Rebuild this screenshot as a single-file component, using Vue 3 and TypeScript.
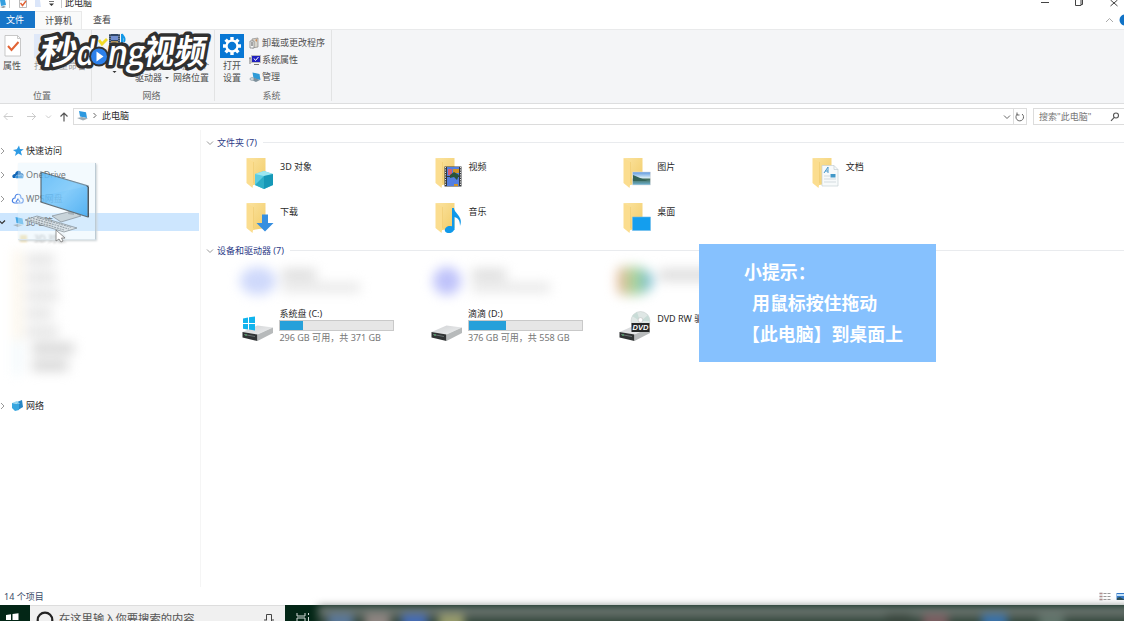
<script setup lang="ts">
interface Folder { name: string; kind: string }
interface Drive { name: string; kind: string; used?: number; detail?: string }

const folders: Folder[] = [
  { name: '3D 对象', kind: 'cube' },
  { name: '视频', kind: 'film' },
  { name: '图片', kind: 'photo' },
  { name: '文档', kind: 'doc' },
  { name: '下载', kind: 'down' },
  { name: '音乐', kind: 'note' },
  { name: '桌面', kind: 'desk' },
]
const drives: Drive[] = [
  { name: '系统盘 (C:)', kind: 'win', used: 20, detail: '296 GB 可用，共 371 GB' },
  { name: '滴滴 (D:)', kind: 'disk', used: 33, detail: '376 GB 可用，共 558 GB' },
  { name: 'DVD RW 驱动器', kind: 'dvd' },
]
const hazyRows: { w: number; deep: boolean }[] = [
  { w: 28, deep: false }, { w: 30, deep: false }, { w: 32, deep: false }, { w: 26, deep: false },
  { w: 32, deep: false }, { w: 42, deep: true }, { w: 36, deep: true },
]
</script>

<template>
  <div class="window">
    <header class="titlebar">
      <svg class="quick" width="62" height="11" viewBox="0 0 62 11">
        <path d="M0 0h5l1 5-5 1z" fill="#369fdf" /><path d="M0 7l4-1 2 1-3 1z" fill="#8b969e" />
        <path d="M9.500 0v8" stroke="#bbb" stroke-width=".8" />
        <path d="M19.500 0h7v7.500h-7z" fill="#fff" stroke="#aaa" stroke-width=".8" />
        <path d="M20.500 3l2 2.500L26 1" fill="none" stroke="#e16336" stroke-width="1.400" />
        <path d="M35 0h5l1 7h-6z" fill="#dbe6fa" />
        <path d="M49 1.500h5" stroke="#555" stroke-width=".8" /><path d="M49 3.500h5l-2.500 2.500z" fill="#333" />
        <path d="M61.500 0v8" stroke="#bbb" stroke-width=".8" />
      </svg>
      <span class="wtitle">此电脑</span>
      <svg class="controls" width="90" height="11" viewBox="0 0 90 11" fill="none" stroke="#444" stroke-width="1">
        <path d="M7 2.500h8M41.500 -1v6.500h5.500V-1M43 -1h5.500v5.500h-1.500M76.500 0l7 6M83.500 0l-7 6" />
      </svg>
    </header>
    <nav class="tabs">
      <span class="tab file">文件</span><span class="tab active">计算机</span><span class="tab view">查看</span>
      <svg class="help" width="20" height="18" viewBox="0 0 20 18">
        <path d="M2 11l3.500-3.500L9 11" fill="none" stroke="#aaa" /><circle cx="21" cy="9" r="5.500" fill="#1072c6" />
      </svg>
    </nav>
    <section class="ribbon">
      <div class="rgroup place">
        <div class="rmain">
          <div class="rbtn first">
            <svg width="20" height="24" viewBox="0 0 20 24">
              <path d="M2 1.500h12.500l3 3V22H2z" fill="#fff" stroke="#bbb" stroke-width=".8" /><path d="M14.500 1.500v3h3" fill="none" stroke="#bbb" stroke-width=".8" />
              <path d="M5 12l3.500 4L15.500 8" fill="none" stroke="#e16335" stroke-width="2" />
            </svg>
            <span>属性</span>
          </div>
          <div class="rbtn faded"><i class="sheet"></i><span>打开&nbsp;&nbsp; 重命名</span></div>
        </div>
        <span class="rlabel">位置</span>
      </div>
      <div class="rgroup net">
        <div class="rmain netmain">
          <svg class="media" width="20" height="44" viewBox="0 0 20 44">
            <path d="M1 3h11v14H1z" fill="#314767" /><path d="M3 5h7v4H3z" fill="#718ed0" /><path d="M3 10h7v5H3z" fill="#b3955c" /><path d="M2 3v13M11 3v13" stroke="#a8aaa7" stroke-dasharray="1 1" />
            <path d="M14 14V3c1 3 4 3 2 8" fill="none" stroke="#1398e7" stroke-width="2" />
            <path d="M4.500 40h4l-2 2z" fill="#333" />
          </svg>
          <div class="nettext"><span class="under">映射网络 添加一个</span><span>驱动器<b class="caret"></b>网络位置</span></div>
        </div>
        <span class="rlabel">网络</span>
      </div>
      <div class="rgroup sys">
        <div class="rmain sysmain">
          <div class="setting">
            <svg width="24" height="24" viewBox="0 0 24 24">
              <path d="M0 0h24v24H0z" fill="#0877d4" />
              <g stroke="#fff" stroke-width="3.400"><path d="M12 3v18M3 12h18M5.600 5.600l12.800 12.800M18.400 5.600L5.600 18.400" /></g>
              <circle cx="12" cy="12" r="6.600" fill="#fff" /><circle cx="12" cy="12" r="4.300" fill="#0877d4" />
            </svg>
            <span>打开</span><span>设置</span>
          </div>
          <div class="syslist">
            <div>
              <svg width="12" height="12" viewBox="0 0 12 12"><path d="M3 2l6-1v9l-6 1z" fill="#d8d4cb" stroke="#888" stroke-width=".7" /><path d="M1 4h4v7H1z" fill="#f3f4f4" stroke="#777" stroke-width=".7" /><path d="M6 3l2-1v3z" fill="#ce8954" /><path d="M2 6h2M2 8h2" stroke="#555" /></svg>
              <span>卸载或更改程序</span>
            </div>
            <div>
              <svg width="12" height="12" viewBox="0 0 12 12"><path d="M2.500 1.500h9v7h-9z" fill="#2020bd" stroke="#bbb" /><path d="M5 4.500l1.500 2L9.500 3" fill="none" stroke="#fff" /><path d="M0 4h2M1 4v6M5 10.500h5" stroke="#777" /></svg>
              <span>系统属性</span>
            </div>
            <div>
              <svg width="12" height="12" viewBox="0 0 12 12"><path d="M3.500 1.500l7 1.500 1 6-7-1.500z" fill="#309bd7" /><path d="M0 8l4-1.500 7 2.500-4 2z" fill="#7c8f9b" /><circle cx="3" cy="8" r="2" fill="#aeb9be" /><circle cx="3" cy="8" r=".7" fill="#fff" /></svg>
              <span>管理</span>
            </div>
          </div>
        </div>
        <span class="rlabel">系统</span>
      </div>
    </section>

    <section class="address">
      <svg width="73" height="18" viewBox="0 0 73 18" fill="none" stroke="#ccc">
        <path d="M4 8.500h9M7.500 5L4 8.500 7.500 12M27 8.500h9M32 5l3.500 3.500L32 12M46 7.500l2.500 2.500L51 7.500" />
        <path d="M64 13.500V5M60.500 8.500L64 5l3.500 3.500" stroke="#555" stroke-width="1.200" />
      </svg>
      <div class="pathbox">
        <svg width="28" height="15" viewBox="0 0 28 15"><path d="M5 2l7 1.300 1 5.700-7-1.500z" fill="#2d99e0" /><path d="M3 9l5-1 6 1.500-5 2z" fill="#9cabb4" /><path d="M19.500 4l2.500 2.500-2.500 2.500" fill="none" stroke="#666" /></svg>
        <span>此电脑</span>
        <svg class="refresh" width="26" height="16" viewBox="0 0 26 16" fill="none" stroke="#666"><path d="M4 6.500l3 3 3-3" /><path d="M13.500 0v16" stroke="#ddd" /><path d="M17.500 5a3.800 3.800 0 1 0 4.500 0M17 3.500V6h2.500" /></svg>
      </div>
      <div class="search"><span>搜索"此电脑"</span><svg width="12" height="12" viewBox="0 0 12 12" fill="none" stroke="#555" stroke-width="1.100"><circle cx="7" cy="4.500" r="2.500" /><path d="M5.300 6.300L2 9.800" /></svg></div>
    </section>

    <main class="body">
      <aside class="side">
        <div class="nav">
          <svg width="26" height="18" viewBox="0 0 26 18"><path d="M1 6l3 3-3 3" fill="none" stroke="#999" /><path d="M19 3.500l1 3.500 3.800.300-3 2.300 1.200 4-3.700-2-3.300 2.400 1-4-3-2 3.800-.800z" fill="#2e9be4" /></svg><span>快速访问</span>
        </div>
        <div class="nav">
          <svg width="26" height="18" viewBox="0 0 26 18"><path d="M1 6l3 3-3 3" fill="none" stroke="#999" /><path d="M13 12c-2-3 1-4 2-4 1-4 6-4 6-1 3 0 3 3 2 5z" fill="#1267b8" /><path d="M16 12.500c-1-3 1-4 3-3 3-2 5 1 4 3z" fill="#2589d7" stroke="#fff" stroke-width=".4" /></svg><span>OneDrive</span>
        </div>
        <div class="nav">
          <svg width="26" height="18" viewBox="0 0 26 18"><path d="M1 6l3 3-3 3" fill="none" stroke="#999" /><path d="M15 13c-4 0-3-5 0-5 0-5 6-5 6 0 3 0 3 5 0 5zM16 12l2-3 2 3" fill="none" stroke="#4780e4" stroke-width="1.200" /></svg><span>WPS网盘</span>
        </div>
        <div class="nav selected">
          <svg width="26" height="18" viewBox="0 0 26 18"><path d="M-1 7.500l3 3 3-3" fill="none" stroke="#333" stroke-width="1.200" /><path d="M15.500 4l7 1.500 1 6-7-1.500z" fill="#44a8e6" /><path d="M13 12l5-1 5 1-5 2z" fill="#a7b7c2" /></svg><span>此电脑</span>
        </div>
        <div class="subrow"><i></i><span>3D 对象</span></div>
        <div class="haze">
          <div v-for="(r, i) in hazyRows" :key="i" class="hrow" :class="{ deep: r.deep }"><i></i><b :style="{ width: r.w + 'px' }"></b></div>
        </div>
        <div class="nav network">
          <svg width="26" height="18" viewBox="0 0 26 18"><path d="M1 6l3 3-3 3" fill="none" stroke="#999" /><path d="M17 5l5-2 1 7-5 3z" fill="#2787c6" /><path d="M12 6l7 1v6l-4 1-3-3z" fill="#38a6df" /><path d="M12 6l5-2 3 3z" fill="#95d7f2" /></svg><span>网络</span>
        </div>
      </aside>

      <section class="content">
        <h2><svg width="9" height="8" viewBox="0 0 9 8"><path d="M1 2.500l3 3 3-3" fill="none" stroke="#999" /></svg><span>文件夹 (7)</span><i></i></h2>
        <div class="grid folders">
          <div v-for="f in folders" :key="f.name" class="item">
            <svg width="34" height="34" viewBox="0 0 34 34">
              <defs><linearGradient id="fold" x1="0" x2="1" y2="1"><stop stop-color="#fbe3a0" /><stop offset="1" stop-color="#f2cc68" /></linearGradient>
                <linearGradient id="pic" x2="0" y2="1"><stop stop-color="#5a96df" /><stop offset=".45" stop-color="#d9edf5" /><stop offset=".55" stop-color="#426c57" /><stop offset="1" stop-color="#6fb4d8" /></linearGradient></defs>
              <path d="M2 1h18.500v25L8 28z" fill="url(#fold)" /><path d="M1.500 1L8.500 5v21l-1 5-6-5z" fill="#fbdd8f" /><path d="M8.500 5v21" stroke="#ecc669" stroke-width=".5" />
              <g v-if="f.kind === 'cube'"><path d="M10 17l9-3 9 3v11l-9 4-9-4z" fill="#5bcce1" /><path d="M10 17l9-3 9 3-9 2z" fill="#9be7f0" /><path d="M19 19l9-2v11l-9 4z" fill="#1698b7" /><path d="M10 28l9-9v13z" fill="#2cadc6" /></g>
              <g v-else-if="f.kind === 'film'"><path d="M10.500 9.500h17v20h-17z" fill="#35383c" /><path d="M13 10h12v9H13zM13 20h12v9H13z" fill="#537fe0" /><path d="M14 12h4v6h-4z" fill="#cf6078" /><path d="M19 12h6v4h-6zM20 27h4v2h-4z" fill="#d09428" /><path d="M20 15l5 3-2 5-3-3-4 1v-3z" fill="#29533b" /><path d="M11.500 10v19M26.500 10v19" stroke="#ddd" stroke-dasharray="1.200 1.200" /></g>
              <g v-else-if="f.kind === 'photo'"><path d="M10.500 15h18v13h-18z" fill="url(#pic)" stroke="#ddd" stroke-width=".6" /><path d="M11 18c5 2 9 4 15 6H11z" fill="#336459" /></g>
              <g v-else-if="f.kind === 'doc'"><path d="M11 8.500h12l4 4V29H11z" fill="#f7fafb" stroke="#c6d1d6" stroke-width=".7" /><path d="M23 8.500v4h4M13 19h6M13 22h12M13 25h12" fill="none" stroke="#c3cdd4" stroke-width=".7" /><path d="M13 16l4-6v6M14 14h3" fill="none" stroke="#4898cb" /><path d="M19.500 17h5v3.500h-5z" fill="#4298c8" /></g>
              <path v-else-if="f.kind === 'down'" d="M17 12.500h6V21h5.500L20 29.500 11.500 21H17z" fill="#368fe0" />
              <g v-else-if="f.kind === 'note'"><ellipse cx="15.500" cy="27.500" rx="4.800" ry="3.500" fill="#1199e9" transform="rotate(-15 15.500 27.500)" /><path d="M18 28V6h2c0 5 10 9 6 18 0-6-2-8-5.500-9v13z" fill="#1199e9" /></g>
              <path v-else d="M10.500 15h18v13.500h-18z" fill="#149eee" stroke="#6dbbe9" stroke-width=".6" />
            </svg>
            <span>{{ f.name }}</span>
          </div>
        </div>
        <h2 class="second"><svg width="9" height="8" viewBox="0 0 9 8"><path d="M1 2.500l3 3 3-3" fill="none" stroke="#999" /></svg><span>设备和驱动器 (7)</span><i></i></h2>
        <div class="grid cloudy">
          <div class="fog one"><i></i><p><b></b><b></b></p></div>
          <div class="fog two"><i></i><p><b></b><b></b></p></div>
          <div class="fog three"><i></i><p><b></b></p></div>
        </div>
        <div class="grid drives">
          <div v-for="d in drives" :key="d.name" class="drive">
            <svg width="38" height="36" viewBox="0 0 38 36">
              <defs><linearGradient id="metal" x2="1" y2="1"><stop stop-color="#cfd1d3" /><stop offset="1" stop-color="#eff0f1" /></linearGradient></defs>
              <path d="M1.500 23l15-6.500 15.500 2-16 7z" fill="url(#metal)" /><path d="M1.500 23l15 2.500v6.500l-15-3.500z" fill="#303334" /><path d="M16.500 25.500l15.500-7v5.500l-15.500 8z" fill="#b7babb" /><path d="M3 25l11 2v1L3 26z" fill="#6a7273" /><path d="M4 26h2" stroke="#53be70" stroke-width="1.200" />
              <path v-if="d.kind === 'win'" d="M2 9.500l5-1V14H2zm6-1.200l6-.800V14H8zM2 15h5v5.500l-5-.700zm6 0h6v6.500l-6-.900z" fill="#12b4ed" />
              <g v-if="d.kind === 'dvd'"><circle cx="22.500" cy="12" r="9.500" fill="#dfe7e5" stroke="#c7cfcd" stroke-width=".6" /><path d="M22 12L14 7l5-4zM23 12l7-6 2 6z" fill="#c9dcd7" /><circle cx="22.500" cy="11" r="2.400" fill="#fff" stroke="#bbb" stroke-width=".6" /><path d="M13.500 14h18v9h-18z" fill="#252727" /><text x="14.500" y="21.300" class="dvdtext" textLength="16">DVD</text></g>
            </svg>
            <div class="dinfo" :class="{ plain: !d.detail }">
              <span>{{ d.name }}</span>
              <template v-if="d.detail"><div class="bar"><i :style="{ width: d.used + '%' }"></i></div><small>{{ d.detail }}</small></template>
            </div>
          </div>
        </div>
      </section>
    </main>
    <footer class="status">
      <span>14 个项目</span>
      <svg width="26" height="12" viewBox="0 0 26 12"><path d="M1.500 1h3v9h-3z" fill="#ddd" /><path d="M1.500 2.500h3M1.500 5.500h3M1.500 8.500h3" stroke="#a77" stroke-width=".8" /><path d="M5.500 2.500h7M5.500 5.500h7M5.500 8.500h7" stroke="#999" stroke-dasharray="3 1" /><path d="M18.500 2h9v7h-9z" fill="#3479c6" /><path d="M19 3h8v2h-8z" fill="#c2e1fa" /><path d="M19 7l3-1 5 3h-8z" fill="#294c55" /></svg>
    </footer>
    <section class="taskbar">
      <div class="start"><svg width="14" height="14" viewBox="0 0 14 14"><path d="M0 2l5-.700V7H0zM6.500 1.100L12.500.300V7h-6zM0 8h5v5.500l-5-.800zm6.500 0h6v7l-6-1z" fill="#fff" /></svg></div>
      <div class="cortana">
        <svg width="20" height="16" viewBox="0 0 20 16"><circle cx="10" cy="14" r="7.300" fill="none" stroke="#222" stroke-width="2.200" /></svg>
        <span>在这里输入你要搜索的内容</span>
        <svg class="mic" width="10" height="16" viewBox="0 0 10 16"><path d="M2.500 14V8.500h5V16M0 14h3M7 14h3" fill="none" stroke="#444" /></svg>
      </div>
      <div class="taskview"><svg width="16" height="16" viewBox="0 0 16 16" fill="none" stroke="#d6ddda"><path d="M2 8v3h8V8M2 16v-3h8v3M13.500 8v2M13.500 12v4" /></svg></div>
      <div class="smear"><i class="a"></i><i class="b"></i><i class="c"></i><i class="d"></i><i class="e"></i><i class="f"></i><i class="g"></i><i class="h"></i></div>
    </section>

    <div class="ghost">
      <svg width="80" height="80" viewBox="0 0 80 80">
        <defs><linearGradient id="screen" x2="1" y2="1"><stop stop-color="#43aef6" /><stop offset=".5" stop-color="#72c4fa" /><stop offset="1" stop-color="#38a5f0" /></linearGradient></defs>
        <path d="M34 53l20-5 9 5-20 6z" fill="#c6d0d5" stroke="#717a80" stroke-width=".7" /><path d="M51 43h5v9l-6-1z" fill="#9da7ad" />
        <path d="M23 9l47 14v31L23 39z" fill="url(#screen)" stroke="#4b5962" stroke-width="1.200" /><path d="M24 33l46-10v-1L24 10z" fill="#8bd1fc" opacity=".3" /><path d="M68.500 23l2 1v30" fill="none" stroke="#333e45" />
        <path d="M7 57l12-4 40 12-13 4z" fill="#dde3e6" stroke="#7a858b" stroke-width=".8" /><path d="M12 57l34 10M15 55.500l36 10.500M19 54.500l35 10" fill="none" stroke="#8e989e" stroke-width="1.100" stroke-dasharray="2 .800" />
      </svg>
    </div>
    <svg class="pointer" width="12" height="14" viewBox="0 0 12 14"><path d="M1 1v11l3-2 2 3 2-1-1.500-3H10z" fill="#fff" stroke="#777" stroke-width=".8" /></svg>

    <svg class="brand" width="180" height="48" viewBox="0 0 180 48">
      <g class="brandtext" transform="skewX(-10)">
        <text x="14" y="33" textLength="37" lengthAdjust="spacingAndGlyphs">秒</text>
        <text x="51" y="34" class="latin" textLength="18" lengthAdjust="spacingAndGlyphs">d</text><text x="82" y="34" class="latin" textLength="38" lengthAdjust="spacingAndGlyphs">ng</text>
        <text x="118" y="33" textLength="62" lengthAdjust="spacingAndGlyphs">视频</text>
      </g>
      <circle cx="69" cy="25.500" r="10" fill="#333" /><circle cx="69" cy="25.500" r="8" fill="#2c80eb" /><path d="M66.500 20.500v10l7-5z" fill="#fff" />
      <path d="M69 9l3 4 5-5" fill="none" stroke="#f3dc29" stroke-width="2.800" />
    </svg>

    <div class="tip"><p>小提示：</p><p class="in">用鼠标按住拖动</p><p class="last">【此电脑】到桌面上</p></div>
  </div>
</template>

<style>
body { margin: 0; overflow: hidden; }
</style>
<style scoped>
* { box-sizing: border-box; }
.window { position: relative; width: 1124px; height: 621px; overflow: hidden; background: #fff; display: flex; flex-direction: column; font: 9px/12px "Noto Sans", "Noto Sans CJK SC", sans-serif; color: #292929; white-space: nowrap; }
svg { display: block; flex: none; }
.titlebar { height: 11px; flex: none; display: flex; }
.wtitle { margin: -4px 0 0 3px; height: 12px; line-height: 13px; }
.controls { margin-left: auto; width: 90px; }
.tabs { height: 18px; flex: none; display: flex; line-height: 18px; color: #444; }
.tab.file { width: 35px; height: 17px; padding-left: 6px; background: #1675c8; color: #fff; }
.tab.active { width: 47px; padding-left: 10px; background: #f9fafa; border: 1px solid #e9e9e9; border-bottom: 0; border-left: 0; line-height: 17px; }
.tab.view { padding-left: 11px; }
.help { margin-left: auto; }
.ribbon { height: 75px; flex: none; display: flex; background: #f4f5f7; border-top: 1px solid #e9eaeb; border-bottom: 1px solid #dddedf; color: #505050; }
.rgroup { display: flex; flex-direction: column; justify-content: space-between; height: 71px; border-right: 1px solid #e2e3e4; }
.place { width: 92px; } .net { width: 123px; } .sys { width: 117px; }
.rlabel { align-self: center; line-height: 12px; margin-bottom: -1px; color: #686868; }
.place .rlabel { margin-right: 7px; } .net .rlabel { margin-right: 3px; } .sys .rlabel { margin-right: 3px; }
.rmain { display: flex; }
.rbtn { display: flex; flex-direction: column; padding-top: 4px; }
.rbtn.first { width: 34px; padding-left: 3px; }
.rbtn span { line-height: 14px; margin-top: 1px; }
.sheet { width: 22px; height: 24px; background: #dfe8f8; }
.faded { color: #9a9a9a; }
.netmain { gap: 4px; padding: 1px 0 0 16px; height: 56px; }
.nettext { display: flex; flex-direction: column; padding: 29px 0 0 3px; }
.nettext span { line-height: 12px; }
.under { color: #777; }
.caret { display: inline-block; margin: 0 4px 2px 3px; border: 2px solid transparent; border-top-color: #444; border-bottom: 0; }
.sysmain { padding: 4px 0 0 5px; gap: 5px; }
.setting { display: flex; flex-direction: column; align-items: center; width: 24px; }
.setting span { line-height: 12px; } .setting svg + span { margin-top: 2px; }
.syslist { display: flex; flex-direction: column; gap: 5.300px; padding-top: 2.600px; }
.syslist div { display: flex; align-items: center; gap: 1px; height: 12px; }
.address { height: 26px; flex: none; display: flex; padding-top: 4px; }
.pathbox { display: flex; width: 954px; height: 17px; border: 1px solid #dcdcdc; line-height: 14px; }
.refresh { margin-left: auto; }
.search { display: flex; justify-content: space-between; width: 91px; height: 17px; margin-left: 6px; padding: 1px 3px 0 5px; border: 1px solid #dcdcdc; border-right: 0; color: #777; line-height: 13px; }
.search svg { margin-top: 1px; }
.body { flex: none; height: 457px; display: flex; }
.side { width: 201px; border-right: 1px solid #f5f5f5; padding-top: 12px; }
.nav { display: flex; height: 18px; width: 199px; line-height: 18px; margin-bottom: 5.800px; }
.nav.selected { background: #cde6fe; margin-bottom: 0; }
.subrow { display: flex; align-items: center; height: 12px; padding: 3px 0 0 20px; gap: 7px; filter: blur(.8px); color: #999; }
.subrow i { width: 7px; height: 7px; background: #f4dfa7; }
.haze { height: 145px; padding-top: 7px; display: flex; flex-direction: column; filter: blur(6px); }
.hrow { display: flex; height: 18px; align-items: center; padding-left: 14px; gap: 5px; }
.hrow i { width: 7px; height: 18px; background: #fcf4e6; }
.hrow b { height: 11px; background: #e4e4e4; }
.hrow.deep { height: 17px; } .hrow.deep b { background: #d6d6d6; margin-left: 6px; } .hrow.deep i { background: #eff7fa; }
.network { margin-top: 9px; }
.content { width: 923px; padding: 6px 0 0 5px; }
h2 { display: flex; align-items: center; height: 13px; margin: 0; font-size: 9px; font-weight: 400; color: #2c3b87; }
h2 span { margin-left: 2px; }
h2 i { height: 1px; background: #e9ebee; flex: 1; margin-left: 6px; }
.grid { display: grid; grid-template-columns: repeat(4, 188.600px); padding-left: 39px; }
.folders { grid-auto-rows: 45px; padding-top: 7px; height: 94px; }
.item { display: flex; } .item span { line-height: 12px; margin: 5px 0 0 1px; }
.item svg { margin-top: 1px; }
.second { margin-top: 1px; }
.cloudy { height: 50px; padding: 8px 0 0 34px; }
.fog { display: flex; gap: 12px; filter: blur(6px); }
.fog i { width: 36px; height: 28px; border-radius: 50%; background: #cfd9fb; margin-top: 2px; }
.fog p { margin: 4px 0 0; } .fog b { display: block; width: 34px; height: 11px; background: #ddd; }
.fog b + b { margin: 3px 0 0 0; width: 78px; height: 9px; background: #e6e6e6; }
.fog.one p { margin-left: -6px; }
.fog.two i { width: 28px; margin-left: 4px; background: #bfc3fa; } .fog.two p { margin-left: -1px; }
.fog.three i { border-radius: 6px 50% 50% 6px; background: linear-gradient(90deg, #efb79b, #a7d799 50%, #70b7e2); }
.fog.three p { margin-left: -6px; } .fog.three p b { width: 54px; height: 12px; }
.drives { padding-left: 35px; }
.drive { display: flex; padding-top: 1px; }
.drive > svg { margin-top: 1px; }
.dinfo { display: flex; flex-direction: column; width: 116px; padding-left: .400px; }
.dinfo > span { line-height: 12px; } .dinfo.plain { padding-top: 5px; padding-left: 1px; }
.bar { width: 115px; height: 11px; border: 1px solid #c9c9c9; background: #e6e6e6; margin: 0 0 1px; }
.bar i { display: block; height: 100%; background: #26a0da; }
small { font-size: 9.050px; line-height: 12px; color: #777; }
.dvdtext { font: italic bold 7.500px "Liberation Sans", sans-serif; fill: #fff; }
.status { height: 18px; flex: none; display: flex; justify-content: space-between; padding: 4px 0 0 4px; color: #3a4c68; }
.taskbar { height: 16px; flex: none; display: flex; background: #032616; }
.start { width: 30px; padding: 8px 0 0 6px; overflow: hidden; }
.cortana { width: 255px; display: flex; background: #f0f0f0; padding-left: 5px; font-size: 11.300px; color: #555; border-top: 1px solid #ddd; }
.cortana span { line-height: 16px; margin: 5px 0 0 4px; }
.mic { margin: 0 11px 0 auto; }
.taskview { width: 32px; padding: 0 0 0 10px; }
.smear { flex: 1; display: flex; height: 26px; gap: 12px; margin: 1px -8px 0 1px; filter: blur(4px); background: linear-gradient(#8d918f, #4d5b53 40%, #102c1d); padding: 8px 0 0 10px; }
.smear i { width: 25px; height: 18px; }
.a { background: #597799; } .b { background: #8f8581; } .c { background: #446bb5; } .d { background: #979b6b; }
.e { background: #38463d; margin-left: 410px; } .f { background: #7a5d60; } .g { background: #3871a9; margin-left: 22px; } .h { background: #60736a; margin-left: 20px; }
.ghost { position: absolute; left: 18px; top: 163px; width: 78px; height: 77px; background: rgba(224, 243, 253, .4); border-right: 1px solid #bdcbd4; border-bottom: 1px solid #dce6ec; box-shadow: 1px 1px 2px #ccd3d7; overflow: hidden; }
.ghost svg { opacity: .85; }
.pointer { position: absolute; left: 55px; top: 229px; }
.brand { position: absolute; left: 30px; top: 31px; overflow: visible; }
.brandtext { font: 700 34px "Noto Sans CJK SC", sans-serif; fill: #fff; stroke: #303030; stroke-width: 7px; stroke-linejoin: round; paint-order: stroke; }
.latin { font: 600 35px "Open Sans", sans-serif; }
.tip { position: absolute; left: 699px; top: 244px; width: 237px; height: 118px; background: #86c1fe; color: #fff; padding: 12px 0 0 45px; font: 600 17.900px/31px "Noto Sans CJK SC", sans-serif; }
.tip p { margin: 0; } .tip .in { padding-left: 8px; }
.tip .last { margin-left: -2px; }
</style>
